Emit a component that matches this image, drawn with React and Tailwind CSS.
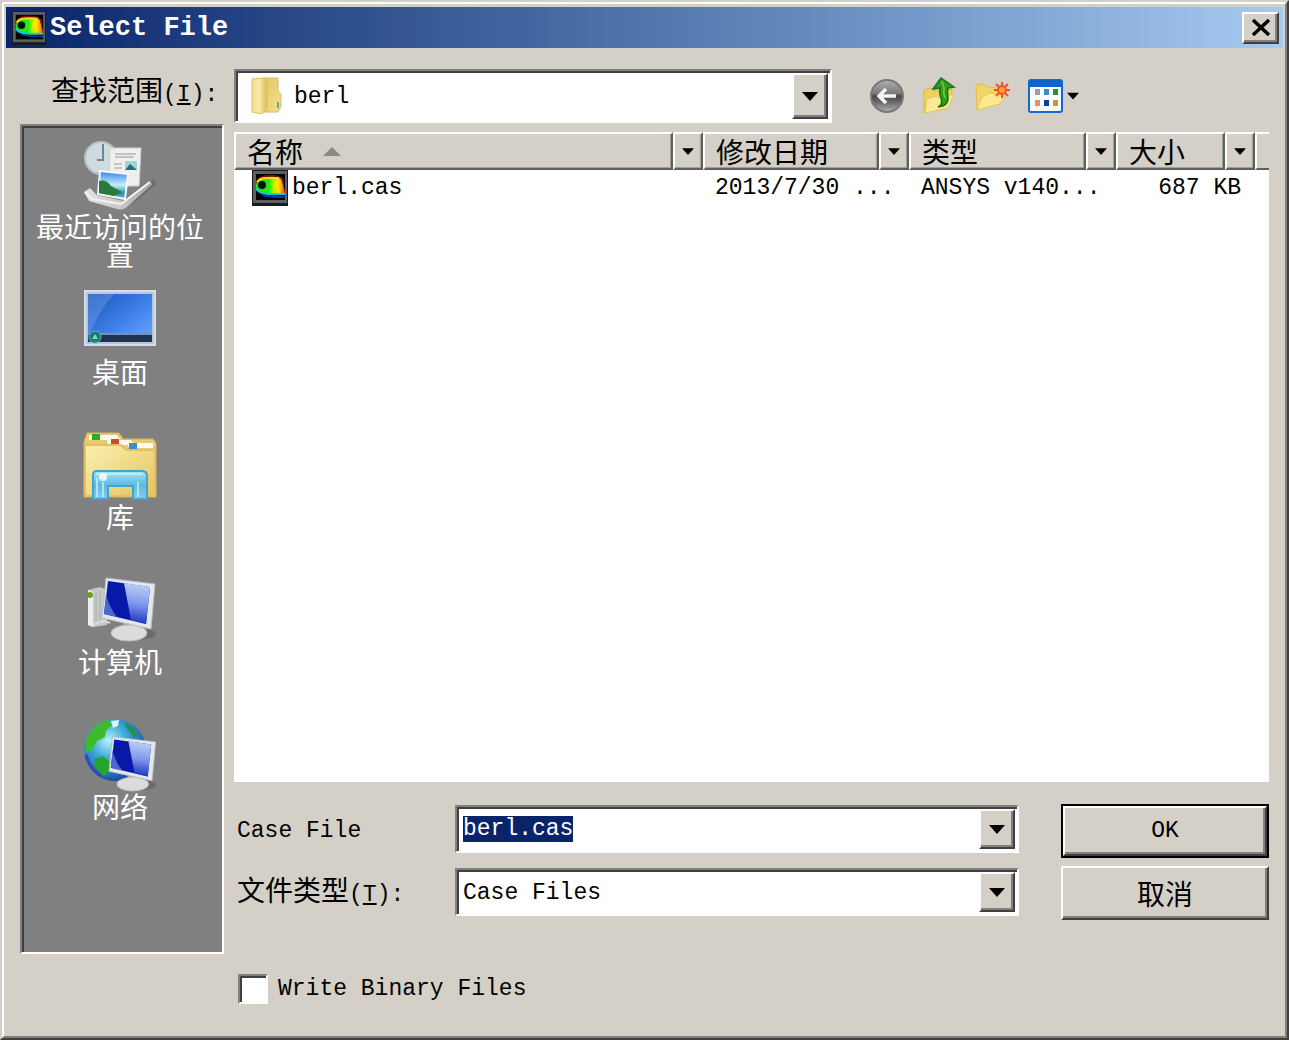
import { useEffect, useRef, useState } from 'react';
import { clsx } from 'clsx';

const raised =
  'bg-[#d4d0c8] border-2 border-t-white border-l-white border-r-[#404040] border-b-[#404040] shadow-[inset_-2px_-2px_0_#808080]';
const sunken =
  'border-2 border-t-[#808080] border-l-[#808080] border-r-white border-b-white shadow-[inset_2px_2px_0_#404040]';
const cjk = "font-['Noto_Sans_CJK_SC',sans-serif] text-[28px]";

function CaseIcon({ className }) {
  return (
    <svg viewBox="0 0 36 36" className={className} aria-hidden="true">
      <defs>
        <linearGradient id="flow" x1="0" y1="0" x2="1" y2="0">
          <stop offset="0" stopColor="#30d820" />
          <stop offset="0.45" stopColor="#18f018" />
          <stop offset="0.62" stopColor="#b8f000" />
          <stop offset="0.78" stopColor="#ffe000" />
          <stop offset="0.9" stopColor="#ff9000" />
          <stop offset="1" stopColor="#f02000" />
        </linearGradient>
      </defs>
      <rect width="36" height="36" fill="#1a1a1a" />
      <rect x="1" y="1" width="34" height="32" fill="#5c6066" />
      <rect x="4" y="4" width="29" height="26" fill="#000" />
      <path d="M4 13Q5 6 14 5Q26 4 32 9V24H19Q7 26 4 19Z" fill="#6a1400" />
      <path d="M4 14Q6 8 15 7Q25 6 29 9L31 15L33 22V25H18Q7 24 4 19Z" fill="url(#flow)" />
      <path d="M5 12Q8 8 14 8L27 8" stroke="#ffd800" strokeWidth="2" fill="none" />
      <path d="M4 19Q8 24 17 24H33" stroke="#00d0e8" strokeWidth="2" fill="none" />
      <path d="M10 25Q18 27 33 27" stroke="#0038a8" strokeWidth="2" fill="none" />
      <path d="M22 13Q25 9 27 13Q26 17 21 18Z" fill="#ffe800" />
      <circle cx="10" cy="15" r="4" fill="#031005" />
    </svg>
  );
}

function FolderIcon() {
  return (
    <svg viewBox="0 0 32 38" className="h-[38px] w-8 shrink-0" aria-hidden="true">
      <defs>
        <linearGradient id="folderL" x1="0" y1="0" x2="1" y2="0">
          <stop offset="0" stopColor="#f3e294" />
          <stop offset="0.5" stopColor="#f6e9a8" />
          <stop offset="1" stopColor="#dcbb55" />
        </linearGradient>
        <linearGradient id="folderR" x1="0" y1="0" x2="1" y2="1">
          <stop offset="0" stopColor="#e2c566" />
          <stop offset="1" stopColor="#f4e08e" />
        </linearGradient>
      </defs>
      <path d="M13 1H28V14L31 17V29L28 35H13Z" fill="url(#folderR)" stroke="#d9bd5e" />
      <path d="M2 2L12 1Q17 2 17 8V29Q17 34 12 37L2 35Z" fill="url(#folderL)" stroke="#dcc067" />
      <path d="M28 25V31" stroke="#6fa6a8" strokeWidth="2" />
    </svg>
  );
}

function BackIcon() {
  return (
    <svg viewBox="0 0 36 36" className="size-9" aria-hidden="true">
      <defs>
        <linearGradient id="back" x1="0" y1="0" x2="0" y2="1">
          <stop offset="0" stopColor="#b0b0b0" />
          <stop offset="0.42" stopColor="#7a7a7a" />
          <stop offset="0.5" stopColor="#484848" />
          <stop offset="0.7" stopColor="#6a6a6a" />
          <stop offset="1" stopColor="#b4b4b4" />
        </linearGradient>
      </defs>
      <circle cx="18" cy="18" r="16" fill="url(#back)" stroke="#787878" strokeWidth="2" />
      <path d="M27 18H11M17 11L10 18L17 25" stroke="#f4f4f4" strokeWidth="3.5" fill="none" />
    </svg>
  );
}

function UpIcon() {
  return (
    <svg viewBox="0 0 34 38" className="h-[38px] w-[34px]" aria-hidden="true">
      <path d="M2 13L9 11L12 14L30 12V22L25 31L2 36Z" fill="#f0d060" stroke="#d9b548" />
      <path d="M3 36L5 22L14 19L18 21L32 17L26 31Z" fill="#fbe996" stroke="#e6c658" />
      <path d="M16 30Q21 28 19 21Q17 15 18 11L11 12L19 1L32 10L26 11Q25 15 26 20Q27 29 16 30Z" fill="#2f9e1e" stroke="#15760c" strokeWidth="1.5" />
      <path d="M20 4L22 11Q21 16 23 21" stroke="#6fcb50" strokeWidth="1.5" fill="none" />
    </svg>
  );
}

function NewFolderIcon() {
  return (
    <svg viewBox="0 0 38 34" className="h-[34px] w-[38px]" aria-hidden="true">
      <path d="M3 6L11 5L14 8L27 9V22L4 31Z" fill="#f3d567" stroke="#dfbd50" />
      <path d="M4 31L9 18L17 14L32 17L27 25Z" fill="#fce98f" stroke="#e6c65a" />
      <path d="M29 3V19M21 11H37M23 5L35 17M35 5L23 17" stroke="#f0522c" strokeWidth="2" />
      <circle cx="29" cy="11" r="5" fill="#f4562a" />
      <circle cx="29" cy="11" r="3" fill="#ffa040" />
    </svg>
  );
}

function ViewIcon() {
  return (
    <svg viewBox="0 0 35 34" className="h-[34px] w-[35px]" aria-hidden="true">
      <rect x="1" y="1" width="33" height="32" rx="2" fill="#fafcff" stroke="#1767cf" strokeWidth="2" />
      <path d="M1 8V3Q1 1 3 1H32Q34 1 34 3V8Z" fill="#0b63ce" />
      <rect x="7" y="10" width="5" height="6" fill="#a79aa5" />
      <rect x="16" y="10" width="5" height="6" fill="#3c8cc8" />
      <rect x="25" y="10" width="5" height="6" fill="#2e8c34" />
      <rect x="7" y="21" width="5" height="6" fill="#f08a5c" />
      <rect x="16" y="21" width="5" height="6" fill="#143c98" />
      <rect x="25" y="21" width="5" height="6" fill="#c09a2c" />
    </svg>
  );
}

function Down({ className }) {
  return (
    <svg viewBox="0 0 16 9" className={className} aria-hidden="true">
      <path d="M0 0H16L8 9Z" fill="#000" />
    </svg>
  );
}

function RecentIcon() {
  return (
    <svg viewBox="0 0 72 72" className="size-[72px]" aria-hidden="true">
      <defs>
        <linearGradient id="tray" x1="0" y1="0" x2="1" y2="0">
          <stop offset="0" stopColor="#e2e2e0" />
          <stop offset="0.6" stopColor="#c4c4c2" />
          <stop offset="1" stopColor="#a0a09e" />
        </linearGradient>
        <linearGradient id="photo" x1="0" y1="0" x2="0" y2="1">
          <stop offset="0" stopColor="#2f83e8" />
          <stop offset="0.5" stopColor="#c8ecfa" />
          <stop offset="0.6" stopColor="#8fd0e0" />
          <stop offset="0.8" stopColor="#2f8ca8" />
          <stop offset="1" stopColor="#70c0e0" />
        </linearGradient>
      </defs>
      <path d="M48 64L72 44L69 40L58 46Z" fill="#666" />
      <circle cx="17" cy="18" r="16" fill="#cfdbe0" stroke="#b3c1c8" strokeWidth="2" />
      <path d="M19 4V20H13" stroke="#6e8696" strokeWidth="2" fill="none" />
      <path d="M26 8L57 8L55 46L25 46Z" fill="#efefed" stroke="#d0d0ce" />
      <path d="M31 14H52M31 17H50M30 24H38M30 28H38" stroke="#b4b6b6" strokeWidth="1.5" />
      <rect x="41" y="21" width="12" height="9" fill="#a2d4e0" />
      <path d="M41 30L46 24L53 30Z" fill="#247075" />
      <path d="M0 52L6 48L13 55L40 61L65 41L69 44L44 66Q39 71 33 69L5 61Z" fill="url(#tray)" />
      <path d="M16 31L44 34L41 59L14 54Z" fill="url(#photo)" stroke="#f3fafc" strokeWidth="2" />
      <path d="M15 41Q22 39 27 46L38 52L30 56L15 53Z" fill="#2a7a3e" />
      <path d="M1 52L8 59L37 64L66 42" stroke="#f2f2f0" strokeWidth="2" fill="none" />
    </svg>
  );
}

function DesktopIcon() {
  return (
    <svg viewBox="0 0 72 72" className="size-[72px]" aria-hidden="true">
      <defs>
        <linearGradient id="desk" x1="0" y1="0" x2="1" y2="1">
          <stop offset="0" stopColor="#1c55b8" />
          <stop offset="0.5" stopColor="#3b7ce6" />
          <stop offset="1" stopColor="#68abfb" />
        </linearGradient>
      </defs>
      <rect x="1" y="6" width="70" height="54" fill="#b6c7df" stroke="#d5dde8" strokeWidth="2" />
      <rect x="4" y="9" width="64" height="48" fill="url(#desk)" />
      <path d="M4 9H30Q16 24 6 48H4Z" fill="#86adea" opacity="0.35" />
      <rect x="4" y="50" width="64" height="7" fill="#1f3350" />
      <path d="M4 49H68" stroke="#7791b5" strokeWidth="2" />
      <circle cx="11" cy="52" r="6" fill="#167a83" stroke="#5cb9b4" />
      <path d="M8 54L11 49L14 54Z" fill="#7ddd9a" />
    </svg>
  );
}

function LibraryIcon() {
  return (
    <svg viewBox="0 0 74 72" className="h-[72px] w-[74px]" aria-hidden="true">
      <defs>
        <linearGradient id="lib" x1="0" y1="0" x2="1" y2="1">
          <stop offset="0" stopColor="#fbf0b0" />
          <stop offset="1" stopColor="#e5c35c" />
        </linearGradient>
        <linearGradient id="glass" x1="0" y1="0" x2="0" y2="1">
          <stop offset="0" stopColor="#a9e6f6" />
          <stop offset="0.5" stopColor="#5cbbe0" />
          <stop offset="1" stopColor="#83cdec" />
        </linearGradient>
      </defs>
      <path d="M1 12L4 3H36L40 9H70L73 13V67H1Z" fill="#e8cb70" stroke="#d5b25b" />
      <path d="M6 5H34L37 10H6Z" fill="#fffbe8" />
      <path d="M24 10H48L52 15H25Z" fill="#fff8ea" />
      <rect x="9" y="4" width="8" height="6" fill="#1fb52b" />
      <rect x="28" y="9" width="8" height="6" fill="#c84e2e" />
      <path d="M2 15H38L43 20H72V66H2Z" fill="url(#lib)" stroke="#e2c068" strokeWidth="2" />
      <path d="M44 13H70V18H46Z" fill="#fffef2" />
      <rect x="46" y="13" width="8" height="6" fill="#3592c8" />
      <path d="M10 45Q10 41 14 41H59Q64 41 64 46V69H50V56H25V69H10Z" fill="url(#glass)" stroke="#43a3cb" strokeWidth="2" />
      <path d="M13 44H60M14 48V67M20 52V67M55 52V67" stroke="#c4f1fa" strokeWidth="1.5" />
      <circle cx="20" cy="47" r="4" fill="#fff" opacity="0.8" />
    </svg>
  );
}

// Shared by the computer and the network icons, drawn in a 54x64 box
function Monitor() {
  return (
    <>
      <ellipse cx="33" cy="57" rx="21" ry="6" fill="#555" opacity="0.5" />
      <path d="M21 46L36 49L35 58H22Z" fill="#aaaeb2" />
      <ellipse cx="27" cy="56" rx="18" ry="8" fill="#dcdcdc" stroke="#bbb" />
      <path d="M4 1L53 7L49 52L0 41Z" fill="#e3e8ec" stroke="#b7bec5" />
      <path d="M6 4L48 10L44 47L2 37Z" fill="#0818a8" />
      <path d="M22 6L48 10L44 47L29 43Z" fill="url(#screen)" />
      <path d="M4 17Q7 30 15 40L2 37Z" fill="#4a68cf" />
    </>
  );
}

function ScreenGradient() {
  return (
    <linearGradient id="screen" x1="0.5" y1="0" x2="0.4" y2="1">
      <stop offset="0" stopColor="#c1d1f9" />
      <stop offset="0.5" stopColor="#7f98ea" />
      <stop offset="1" stopColor="#1730be" />
    </linearGradient>
  );
}

function ComputerIcon() {
  return (
    <svg viewBox="0 0 72 72" className="size-[72px]" aria-hidden="true">
      <defs>
        <ScreenGradient />
      </defs>
      <path d="M4 15L16 12L23 15V50L9 52L4 50Z" fill="#c7c9cb" />
      <path d="M4 15L9 17V52L4 50Z" fill="#edf0f2" />
      <path d="M12 17V49M16 16V49" stroke="#aaa" />
      <circle cx="6" cy="20" r="3" fill="#6c9c22" />
      <path d="M9 50Q18 44 26 48" stroke="#dcdcdc" strokeWidth="2" fill="none" />
      <g transform="translate(18 2)">
        <Monitor />
      </g>
    </svg>
  );
}

function NetworkIcon() {
  return (
    <svg viewBox="0 0 72 74" className="h-[74px] w-[72px]" aria-hidden="true">
      <defs>
        <radialGradient id="globe" cx="0.4" cy="0.35" r="0.7">
          <stop offset="0" stopColor="#b8f4fa" />
          <stop offset="0.4" stopColor="#3fa8d8" />
          <stop offset="0.8" stopColor="#2468b8" />
          <stop offset="1" stopColor="#153c94" />
        </radialGradient>
      </defs>
      <circle cx="31" cy="31" r="31" fill="url(#globe)" />
      <path d="M2 22Q9 5 23 1L29 5L22 12L21 18L13 22L8 31L2 33Z" fill="#3cbc2c" />
      <path d="M11 40L19 37L26 43L26 52L20 57Q14 53 10 46Z" fill="#27a52a" />
      <path d="M40 3Q49 7 56 17L50 18L43 10Z" fill="#258f58" />
      <path d="M27 2L35 1L34 7L29 9Z" fill="#d9f7f5" />
      <path d="M2 36Q6 50 17 57" stroke="#3c44b4" strokeWidth="3" fill="none" />
      <g transform="translate(25 17) scale(0.88 0.86)">
        <Monitor />
      </g>
    </svg>
  );
}

const places = [
  { label: '最近访问的位置', Icon: RecentIcon },
  { label: '桌面', Icon: DesktopIcon },
  { label: '库', Icon: LibraryIcon },
  { label: '计算机', Icon: ComputerIcon },
  { label: '网络', Icon: NetworkIcon },
];

const columns = [
  { label: '名称', sorted: true },
  { label: '修改日期' },
  { label: '类型' },
  { label: '大小' },
];

const files = [{ name: 'berl.cas', date: '2013/7/30 ...', type: 'ANSYS v140...', size: '687 KB' }];

function ArrowBox() {
  return (
    <span className={clsx(raised, 'pointer-events-none absolute inset-y-0.5 right-0.5 flex w-9 items-center justify-center')}>
      <Down className="h-[9px] w-4" />
    </span>
  );
}

function HeaderCell({ label, sorted }) {
  const cell =
    'h-full border-2 border-t-white border-l-white border-r-[#606060] border-b-[#606060] shadow-[inset_-1px_-1px_0_#a09e98]';
  return (
    <th scope="col" className="h-[38px] p-0 font-normal">
      <div className="flex h-[38px]">
        <button type="button" className={clsx(cell, cjk, 'flex min-w-0 flex-1 items-center gap-5 pl-[11px] leading-8')}>
          {label}
          {sorted && (
            <svg viewBox="0 0 18 9" className="h-[9px] w-[18px]" aria-hidden="true">
              <path d="M9 0L18 9H0Z" fill="#8c8a85" />
            </svg>
          )}
        </button>
        <button type="button" aria-label={`${label} 筛选`} className={clsx(cell, 'flex w-[30px] items-center justify-center')}>
          <Down className="h-[7px] w-3" />
        </button>
      </div>
    </th>
  );
}

export default function App() {
  const [fileName, setFileName] = useState('berl.cas');
  const [binary, setBinary] = useState(false);
  const fileRef = useRef(null);

  useEffect(() => {
    fileRef.current.focus();
    fileRef.current.select();
  }, []);

  return (
    <div className="min-h-screen flex flex-col border-2 border-t-[#d4d0c8] border-l-[#d4d0c8] border-r-[#404040] border-b-[#404040] bg-[#d4d0c8] font-['Liberation_Mono','Noto_Sans_CJK_SC',monospace] text-[23px] leading-7 text-black">
      <div className="flex flex-1 flex-col border-2 border-t-white border-l-white border-r-[#808080] border-b-[#808080] px-0.5 pt-[3px]">
        <header className="flex h-[41px] items-center bg-linear-to-r from-[#0a246a] to-[#a6caf0] pr-1 pl-1.5">
          <CaseIcon className="size-[34px]" />
          <h1 className="flex-1 pl-1 text-[27px] font-bold text-white">Select File</h1>
          <button type="button" aria-label="关闭" className={clsx(raised, 'flex h-8 w-[37px] items-center justify-center')}>
            <svg viewBox="0 0 20 17" className="h-[17px] w-5" aria-hidden="true">
              <path d="M2 1L18 16M18 1L2 16" stroke="#000" strokeWidth="3.5" />
            </svg>
          </button>
        </header>

        <main className="flex flex-1 gap-2.5 pt-[21px] pr-3.5 pb-8 pl-3.5">
          <div className="flex w-[204px] shrink-0 flex-col pb-[50px]">
            <label htmlFor="look-in" className="h-[55px] pt-1.5 pl-[31px] whitespace-nowrap">
              <span className={cjk}>查找范围</span>(<u>I</u>):
            </label>
            <nav className={clsx(sunken, 'flex-1 bg-[#808080] pt-3.5 pr-5 pl-4')}>
              {places.map(({ label, Icon }) => (
                <button key={label} type="button" className="flex h-[145px] w-full flex-col items-center text-white">
                  <span className="flex h-[72px] items-center">
                    <Icon />
                  </span>
                  <span className={clsx(cjk, 'w-[168px] leading-7')}>{label}</span>
                </button>
              ))}
            </nav>
          </div>

          <div className="flex min-w-0 flex-1 flex-col">
            <div className="flex items-center gap-[37px]">
              <div className={clsx(sunken, 'relative flex h-[54px] flex-1 items-center bg-white pl-3.5')}>
                <FolderIcon />
                <select id="look-in" className="h-full w-full appearance-none bg-transparent pt-0.5 pl-3 outline-none">
                  <option>berl</option>
                </select>
                <ArrowBox />
              </div>
              <div className="flex w-[400px] items-center gap-[17px]">
                <button type="button" aria-label="后退"><BackIcon /></button>
                <button type="button" aria-label="向上一级"><UpIcon /></button>
                <button type="button" aria-label="新建文件夹"><NewFolderIcon /></button>
                <button type="button" aria-label="视图" className="flex items-center gap-1">
                  <ViewIcon />
                  <Down className="h-2 w-3" />
                </button>
              </div>
            </div>

            <div className="mt-[9px] flex-1 bg-white">
              <table className="w-full table-fixed border-collapse text-left">
                <colgroup>
                  <col />
                  <col className="w-[206px]" />
                  <col className="w-[207px]" />
                  <col className="w-[139px]" />
                  <col className="w-3.5" />
                </colgroup>
                <thead className="bg-[#d4d0c8]">
                  <tr>
                    {columns.map((c) => (
                      <HeaderCell key={c.label} {...c} />
                    ))}
                    <td className="p-0">
                      <div className="h-[38px] border-t-2 border-b-2 border-l-2 border-t-white border-b-[#606060] border-l-white" />
                    </td>
                  </tr>
                </thead>
                <tbody>
                  {files.map((f) => (
                    <tr key={f.name} className="h-9 whitespace-nowrap">
                      <td className="p-0">
                        <div className="flex items-center gap-1 pl-[18px]">
                          <CaseIcon className="size-9" />
                          {f.name}
                        </div>
                      </td>
                      <td className="p-0 pl-3">{f.date}</td>
                      <td className="p-0 pl-3">{f.type}</td>
                      <td className="p-0 pr-3.5 text-right">{f.size}</td>
                      <td className="p-0" />
                    </tr>
                  ))}
                </tbody>
              </table>
            </div>

            <div className="mt-[22px] flex gap-[42px]">
              <div className="flex flex-1 flex-col gap-[15px] pt-px">
                <div className="flex items-center">
                  <label htmlFor="case-file" className="w-[221px] pt-1 pl-[3px]">Case File</label>
                  <div className={clsx(sunken, 'relative h-12 min-w-0 flex-1 bg-white')}>
                    <input
                      id="case-file"
                      ref={fileRef}
                      type="text"
                      value={fileName}
                      onChange={(e) => setFileName(e.target.value)}
                      className="h-full w-full bg-transparent pr-10 pl-1.5 outline-none selection:bg-[#0a246a] selection:text-white"
                    />
                    <ArrowBox />
                  </div>
                </div>
                <div className="flex items-center">
                  <label htmlFor="file-type" className="w-[221px] pl-[3px] whitespace-nowrap">
                    <span className={cjk}>文件类型</span>(<u>T</u>):
                  </label>
                  <div className={clsx(sunken, 'relative h-12 min-w-0 flex-1 bg-white')}>
                    <select id="file-type" className="h-full w-full appearance-none bg-transparent pt-0.5 pl-1.5 outline-none">
                      <option>Case Files</option>
                    </select>
                    <ArrowBox />
                  </div>
                </div>
              </div>
              <div className="flex w-52 flex-col gap-2">
                <button type="button" className="h-[54px] border-2 border-black">
                  <span className={clsx(raised, 'flex h-full items-center justify-center')}>OK</span>
                </button>
                <button type="button" className={clsx(raised, cjk, 'h-[54px] leading-8')}>取消</button>
              </div>
            </div>

            <label className="mt-[54px] flex items-center gap-2.5 pl-1">
              <input
                type="checkbox"
                checked={binary}
                onChange={(e) => setBinary(e.target.checked)}
                className={clsx(sunken, 'size-[30px] appearance-none bg-white checked:bg-[#0a246a]')}
              />
              Write Binary Files
            </label>
          </div>
        </main>
      </div>
    </div>
  );
}
